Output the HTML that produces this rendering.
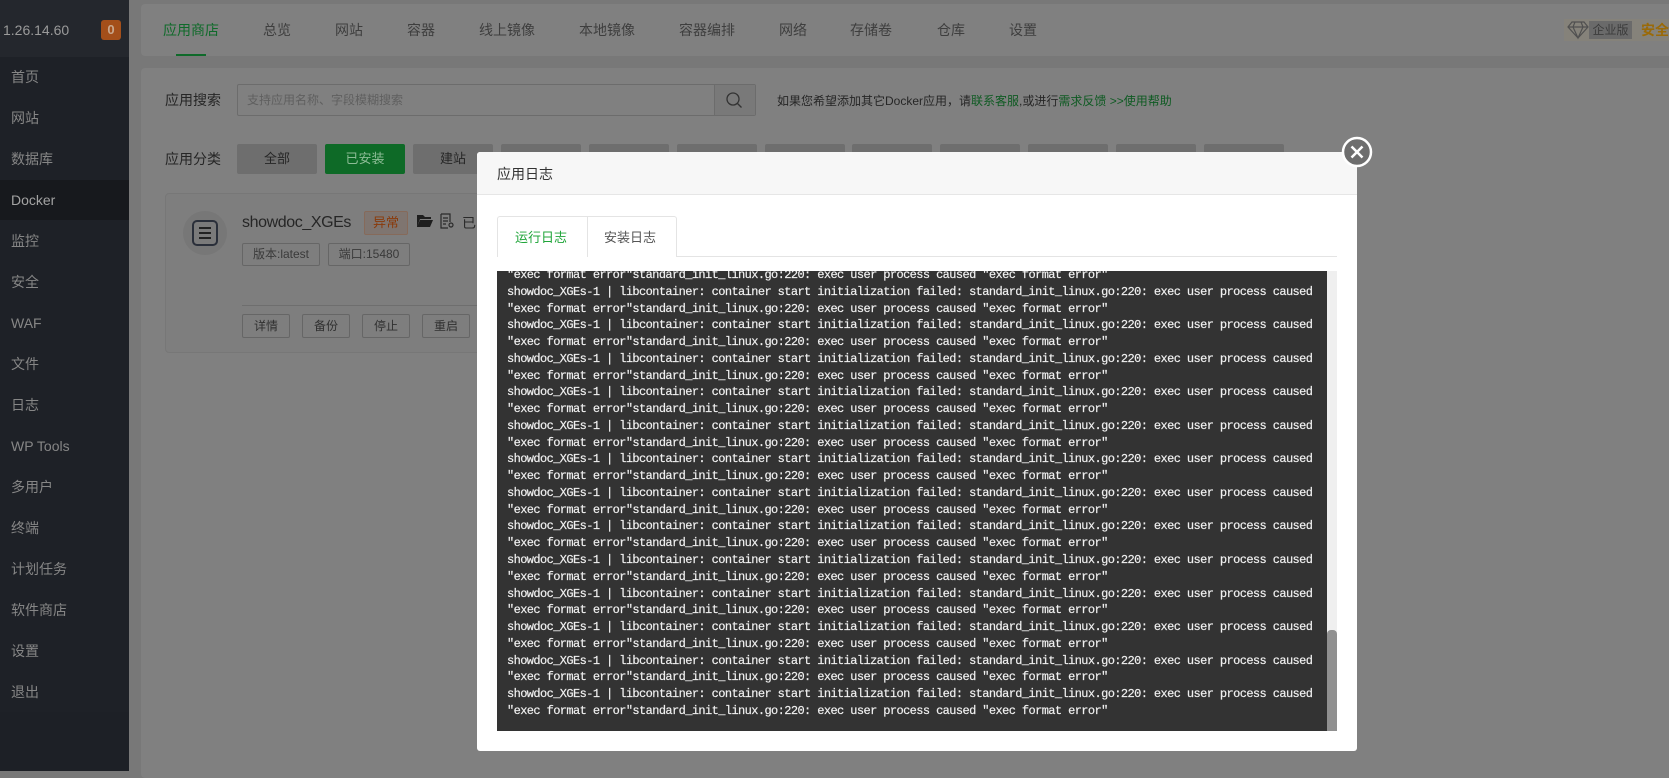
<!DOCTYPE html>
<html><head><meta charset="utf-8">
<style>
*{margin:0;padding:0;box-sizing:border-box}
body{width:1669px;height:771px;overflow:hidden;background:#787878;font-family:"Liberation Sans","Noto Sans CJK SC",sans-serif;position:relative}
.a{position:absolute;white-space:nowrap}
#sb{left:0;top:0;width:129px;height:771px;background:#1e2127}
#sbh{left:0;top:0;width:129px;height:57px;background:#24272d}
.mi{position:absolute;left:11px;font-size:14px;color:#868686;line-height:20px}
#dock{left:0;top:180px;width:129px;height:40px;background:#17191d}
.nav{position:absolute;top:20px;font-size:14px;color:#3e3e3e;line-height:20px}
.pn{background:#808080;border-radius:4px}
.tile{position:absolute;top:144px;width:80px;height:30px;background:#6e6e6e;border-radius:2px;font-size:13px;color:#262626;text-align:center;line-height:30px}
.btn{position:absolute;top:314px;width:48px;height:24px;border:1px solid #666;border-radius:2px;font-size:12px;color:#303030;text-align:center;line-height:22px}
.tag{position:absolute;top:243px;height:23px;border:1px solid #666;border-radius:2px;font-size:12px;color:#3a3a3a;line-height:21px;text-align:center}
#modal{left:477px;top:152px;width:880px;height:599px;background:#fff;border-radius:3px}
#mh{left:0;top:0;width:880px;height:43px;background:#f7f7f7;border-bottom:1px solid #e6e6e6;border-radius:3px 3px 0 0}
#log{left:20px;top:119px;width:840px;height:460px;background:#333;overflow:hidden}
#lt{position:absolute;left:10px;top:-4px;font-family:"Liberation Mono","DejaVu Sans Mono",monospace;font-size:12px;letter-spacing:-0.6px;line-height:16.77px;color:#f0f0f0;white-space:pre;-webkit-text-stroke:0.2px #f0f0f0}
</style></head><body>
<div id="sb" class="a"></div>
<div id="sbh" class="a"></div>
<div class="a" style="left:3px;top:20px;font-size:14px;color:#9a9a9a;line-height:20px">1.26.14.60</div>
<div class="a" style="left:101px;top:20px;width:20px;height:20px;background:#a44f1a;border-radius:3px;color:#c9a88e;font-size:13px;font-weight:bold;text-align:center;line-height:20px">0</div>
<div id="dock" class="a"></div>
<div class="mi" style="top:67px">首页</div>
<div class="mi" style="top:108px">网站</div>
<div class="mi" style="top:149px">数据库</div>
<div class="mi" style="top:190px;color:#a3a3a3">Docker</div>
<div class="mi" style="top:231px">监控</div>
<div class="mi" style="top:272px">安全</div>
<div class="mi" style="top:313px">WAF</div>
<div class="mi" style="top:354px">文件</div>
<div class="mi" style="top:395px">日志</div>
<div class="mi" style="top:436px">WP Tools</div>
<div class="mi" style="top:477px">多用户</div>
<div class="mi" style="top:518px">终端</div>
<div class="mi" style="top:559px">计划任务</div>
<div class="mi" style="top:600px">软件商店</div>
<div class="mi" style="top:641px">设置</div>
<div class="mi" style="top:682px">退出</div>
<div class="a" style="left:0;top:712px;width:129px;height:59px;background:#1d2026"></div>

<div class="a pn" style="left:141px;top:4px;width:1540px;height:52px"></div>
<div class="nav" style="left:163px;color:#0f6a2a">应用商店</div>
<div class="a" style="left:176px;top:54px;width:30px;height:2px;background:#0f6a2a"></div>
<div class="nav" style="left:263px">总览</div>
<div class="nav" style="left:335px">网站</div>
<div class="nav" style="left:407px">容器</div>
<div class="nav" style="left:479px">线上镜像</div>
<div class="nav" style="left:579px">本地镜像</div>
<div class="nav" style="left:679px">容器编排</div>
<div class="nav" style="left:779px">网络</div>
<div class="nav" style="left:850px">存储卷</div>
<div class="nav" style="left:937px">仓库</div>
<div class="nav" style="left:1009px">设置</div>
<div class="a" style="left:1564px;top:19px;width:110px;height:22px;background:#85827a"></div>
<svg class="a" style="left:1567px;top:20px" width="22" height="20" viewBox="0 0 22 20"><path d="M5 2h12l4 5-10 11L1 7z M1 7h20 M8 2l-2 5 5 11 5-11-2-5" fill="none" stroke="#505050" stroke-width="1.2"/></svg>
<div class="a" style="left:1589px;top:21px;width:43px;height:18px;background:#6a6a6a;font-size:12px;color:#3c3c3c;line-height:18px;text-align:center">企业版</div>
<div class="a" style="left:1641px;top:20px;font-size:14px;color:#9a6a08;font-weight:bold;line-height:20px">安全.</div>

<div class="a pn" style="left:141px;top:68px;width:1540px;height:710px"></div>
<div class="a" style="left:165px;top:90px;font-size:14px;color:#262626;line-height:20px">应用搜索</div>
<div class="a" style="left:237px;top:84px;width:519px;height:32px;border:1px solid #6c6c6c;border-radius:2px;background:#808080"></div>
<div class="a" style="left:247px;top:91px;font-size:12px;color:#5f5f5f;line-height:18px">支持应用名称、字段模糊搜索</div>
<div class="a" style="left:714px;top:85px;width:41px;height:30px;border-left:1px solid #6c6c6c;background:#797979"></div>
<svg class="a" style="left:725px;top:91px" width="18" height="18" viewBox="0 0 18 18"><circle cx="8" cy="8" r="6" fill="none" stroke="#333" stroke-width="1.3"/><path d="M12.5 12.5l4 4" stroke="#333" stroke-width="1.3"/></svg>
<div class="a" style="left:777px;top:92px;font-size:12px;color:#262626;line-height:18px">如果您希望添加其它Docker应用，请<span style="color:#0e5a22">联系客服</span>,或进行<span style="color:#0e5a22">需求反馈</span> <span style="color:#0e5a22">&gt;&gt;使用帮助</span></div>
<div class="a" style="left:165px;top:149px;font-size:14px;color:#262626;line-height:20px">应用分类</div>
<div class="tile" style="left:237px">全部</div>
<div class="tile" style="left:325px;background:#0e6a27;color:#8dbc96">已安装</div>
<div class="tile" style="left:413px">建站</div>
<div class="tile" style="left:501px"></div><div class="tile" style="left:589px"></div><div class="tile" style="left:677px"></div><div class="tile" style="left:765px"></div><div class="tile" style="left:852px"></div><div class="tile" style="left:940px"></div><div class="tile" style="left:1028px"></div><div class="tile" style="left:1116px"></div><div class="tile" style="left:1204px"></div>

<div class="a" style="left:165px;top:193px;width:400px;height:160px;border:1px solid #777;border-radius:4px;background:#7e7e7e"></div>
<div class="a" style="left:183px;top:211px;width:44px;height:44px;border-radius:50%;background:#777"></div>
<div class="a" style="left:192px;top:220px;width:26px;height:26px;border-radius:5px;background:#7a7a7a;border:2px solid #2a2f3a"></div>
<div class="a" style="left:199px;top:227px;width:12px;height:2px;background:#222;box-shadow:0 5px 0 #222,0 10px 0 #222"></div>
<div class="a" style="left:242px;top:211px;font-size:16px;letter-spacing:-0.4px;color:#262626;line-height:24px">showdoc_XGEs</div>
<div class="a" style="left:364px;top:211px;width:44px;height:24px;border:1px solid #866a5a;background:#7f7570;border-radius:2px;font-size:13px;color:#8a3a0a;text-align:center;line-height:22px">异常</div>
<svg class="a" style="left:417px;top:214px" width="16" height="14" viewBox="0 0 16 14"><path d="M0 1h6l2 2h6v2H3L0 13z M3 6h13l-3 7H0z" fill="#1e1e1e"/></svg>
<svg class="a" style="left:440px;top:213px" width="14" height="16" viewBox="0 0 14 16"><path d="M1 1h9v8M1 1v14h7M3 5h5M3 8h5M3 11h3" fill="none" stroke="#2a2a2a" stroke-width="1.2"/><circle cx="11" cy="12" r="2" fill="none" stroke="#2a2a2a" stroke-width="1.2"/></svg>
<div class="a" style="left:462px;top:213px;font-size:14px;color:#2a2a2a">已</div>
<div class="tag" style="left:242px;width:78px">版本:latest</div>
<div class="tag" style="left:328px;width:82px">端口:15480</div>
<div class="a" style="left:242px;top:305px;width:320px;height:1px;background:#6e6e6e"></div>
<div class="btn" style="left:242px">详情</div>
<div class="btn" style="left:302px">备份</div>
<div class="btn" style="left:362px">停止</div>
<div class="btn" style="left:422px">重启</div>

<div id="modal" class="a">
<div id="mh" class="a"></div>
<div class="a" style="left:20px;top:12px;font-size:14px;color:#333;line-height:20px">应用日志</div>
<div class="a" style="left:20px;top:104px;width:840px;height:1px;background:#e4e4e4"></div>
<div class="a" style="left:20px;top:64px;width:180px;height:41px;border:1px solid #e4e4e4;border-bottom:none;border-radius:3px 3px 0 0;background:#fff"></div>
<div class="a" style="left:110px;top:64px;width:1px;height:41px;background:#e4e4e4"></div>
<div class="a" style="left:21px;top:104px;width:89px;height:2px;background:#fff"></div>
<div class="a" style="left:38px;top:77px;font-size:13px;color:#20a53a;line-height:18px">运行日志</div>
<div class="a" style="left:127px;top:77px;font-size:13px;color:#555;line-height:18px">安装日志</div>
<div id="log" class="a"><div id="lt">"exec format error"standard_init_linux.go:220: exec user process caused "exec format error"
showdoc_XGEs-1 | libcontainer: container start initialization failed: standard_init_linux.go:220: exec user process caused
"exec format error"standard_init_linux.go:220: exec user process caused "exec format error"
showdoc_XGEs-1 | libcontainer: container start initialization failed: standard_init_linux.go:220: exec user process caused
"exec format error"standard_init_linux.go:220: exec user process caused "exec format error"
showdoc_XGEs-1 | libcontainer: container start initialization failed: standard_init_linux.go:220: exec user process caused
"exec format error"standard_init_linux.go:220: exec user process caused "exec format error"
showdoc_XGEs-1 | libcontainer: container start initialization failed: standard_init_linux.go:220: exec user process caused
"exec format error"standard_init_linux.go:220: exec user process caused "exec format error"
showdoc_XGEs-1 | libcontainer: container start initialization failed: standard_init_linux.go:220: exec user process caused
"exec format error"standard_init_linux.go:220: exec user process caused "exec format error"
showdoc_XGEs-1 | libcontainer: container start initialization failed: standard_init_linux.go:220: exec user process caused
"exec format error"standard_init_linux.go:220: exec user process caused "exec format error"
showdoc_XGEs-1 | libcontainer: container start initialization failed: standard_init_linux.go:220: exec user process caused
"exec format error"standard_init_linux.go:220: exec user process caused "exec format error"
showdoc_XGEs-1 | libcontainer: container start initialization failed: standard_init_linux.go:220: exec user process caused
"exec format error"standard_init_linux.go:220: exec user process caused "exec format error"
showdoc_XGEs-1 | libcontainer: container start initialization failed: standard_init_linux.go:220: exec user process caused
"exec format error"standard_init_linux.go:220: exec user process caused "exec format error"
showdoc_XGEs-1 | libcontainer: container start initialization failed: standard_init_linux.go:220: exec user process caused
"exec format error"standard_init_linux.go:220: exec user process caused "exec format error"
showdoc_XGEs-1 | libcontainer: container start initialization failed: standard_init_linux.go:220: exec user process caused
"exec format error"standard_init_linux.go:220: exec user process caused "exec format error"
showdoc_XGEs-1 | libcontainer: container start initialization failed: standard_init_linux.go:220: exec user process caused
"exec format error"standard_init_linux.go:220: exec user process caused "exec format error"
showdoc_XGEs-1 | libcontainer: container start initialization failed: standard_init_linux.go:220: exec user process caused
"exec format error"standard_init_linux.go:220: exec user process caused "exec format error"</div>
<div class="a" style="left:830px;top:0;width:10px;height:460px;background:#efefef"></div>
<div class="a" style="left:830px;top:359px;width:10px;height:101px;background:#909090;border-radius:4px 4px 0 0"></div>
</div>
</div>
<svg class="a" style="left:1341px;top:136px" width="32" height="32" viewBox="0 0 32 32"><circle cx="16" cy="16" r="14" fill="#6e6e6e" stroke="#fff" stroke-width="2.5"/><path d="M10.5 10.5l11 11M21.5 10.5l-11 11" stroke="#fff" stroke-width="2.5"/></svg>
</body></html>
